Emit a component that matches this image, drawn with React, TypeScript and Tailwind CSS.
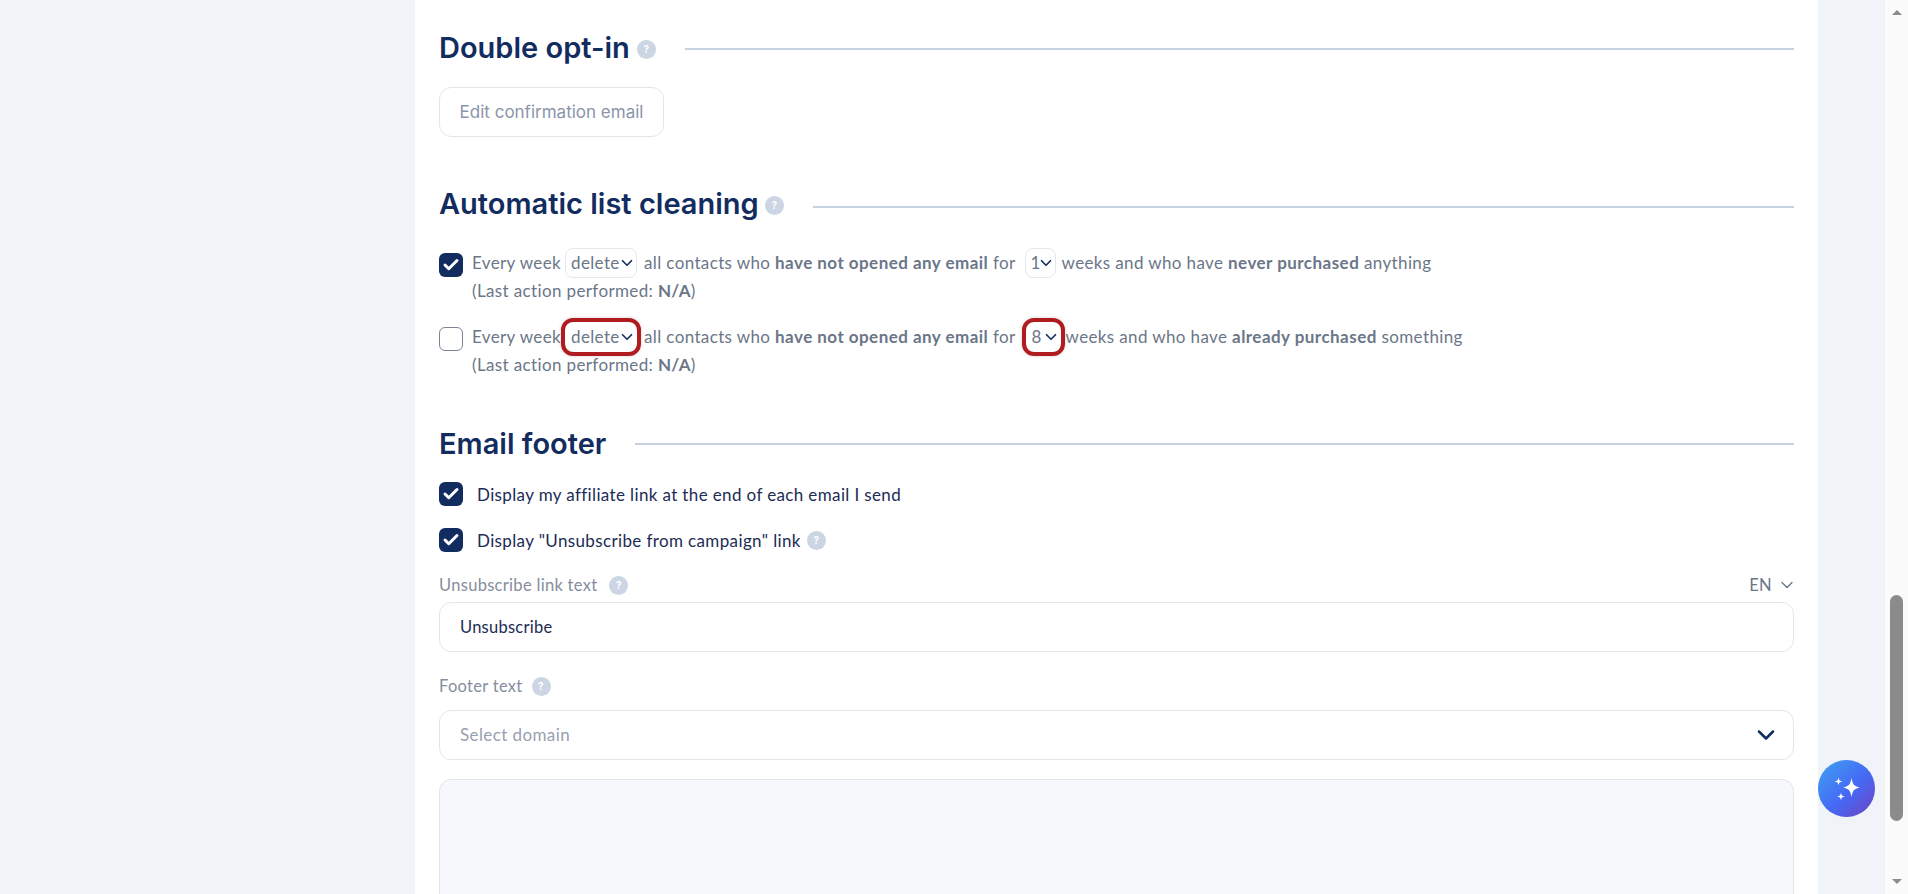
import { Check, ChevronDown } from "lucide-react";

const body = "font-['Lato','Liberation_Sans',sans-serif]";

function Help({ className = "" }: { className?: string }) {
    return (
        <span className={`inline-flex h-[19px] w-[19px] shrink-0 items-center justify-center rounded-full bg-[#cbd5e3] font-['Inter',sans-serif] text-[10px] font-bold leading-none text-white ${className}`}>
            ?
        </span>
    );
}

function SectionTitle({ title, help, gap, line = "" }: { title: string; help?: string; gap: string; line?: string }) {
    return (
        <div className="flex h-[36px] items-center">
            <h2 className="font-['Inter',sans-serif] text-[29px] font-semibold leading-[36px] text-[#132c60]">{title}</h2>
            {help && <Help className={`mt-[2px] ${help}`} />}
            <div className={`h-[2px] flex-1 bg-[#c8d3e1] ${gap} ${line}`} />
        </div>
    );
}

function Box({ checked }: { checked: boolean }) {
    if (!checked) {
        return <span className="block h-[24px] w-[24px] shrink-0 rounded-[6px] border border-[#7a8494] bg-white" />;
    }
    return (
        <span className="flex h-[24px] w-[24px] shrink-0 items-center justify-center rounded-[6px] bg-[#132c60]">
            <Check size={18} strokeWidth={4} color="#fff" />
        </span>
    );
}

function MiniSelect({ value, width, marked = false }: { value: string; width: string; marked?: boolean }) {
    return (
        <span
            className={`inline-flex h-[30px] items-center justify-between rounded-[8px] border pl-[5px] align-middle ${width} ${
                marked
                    ? "border-transparent outline-[4px] outline-[#b01c20] shadow-[0_0_4px_3px_rgba(90,40,40,0.35)]"
                    : "border-[#e4e8ee]"
            }`}
        >
            <span>{value}</span>
            <ChevronDown size={18} strokeWidth={2.2} color="#132c60" className="-ml-[4px] shrink-0" />
        </span>
    );
}

function CleaningRow({ checked, marked, weeks, tail, bold, end }: {
    checked: boolean;
    marked: boolean;
    weeks: string;
    tail: string;
    bold: string;
    end: string;
}) {
    return (
        <div className="flex">
            <div className="pt-[5px]">
                <Box checked={checked} />
            </div>
            <div className="ml-[9px] text-[17px] leading-[28px] tracking-[0.37px] text-[#6b7688]">
                <div className="flex h-[30px] items-center whitespace-pre">
                    <span>Every week</span>
                    <span className="ml-[4px] mr-[7px] flex">
                        <MiniSelect value="delete" width="w-[72px]" marked={marked} />
                    </span>
                    <span>all contacts who <b className="font-bold tracking-[0.46px]">have not opened any email</b> for</span>
                    <span className={marked ? "ml-[10px] mr-[5px] flex" : "ml-[9px] mr-[6px] flex"}>
                        <MiniSelect value={weeks} width={marked ? "w-[35px]" : "w-[31px]"} marked={marked} />
                    </span>
                    <span>{tail} <b className="font-bold tracking-[0.46px]">{bold}</b> {end}</span>
                </div>
                <div className="-mt-[1px]">(Last action performed: <b className="font-bold">N/A</b>)</div>
            </div>
        </div>
    );
}

function Sparkles() {
    return (
        <svg width="28" height="28" viewBox="0 0 28 28" fill="#fff">
            <path d="M18.5 3 C19.8 9.6 20.6 11 27 12.5 C20.6 14 19.8 15.4 18.5 22 C17.2 15.4 16.4 14 10 12.5 C16.4 11 17.2 9.6 18.5 3 Z" />
            <path d="M5.5 2.5 C6.1 5.6 6.5 6 9.5 6.5 C6.5 7 6.1 7.4 5.5 10.5 C4.9 7.4 4.5 7 1.5 6.5 C4.5 6 4.9 5.6 5.5 2.5 Z" />
            <path d="M8 17.5 C8.6 20.6 9 21 12 21.5 C9 22 8.6 22.4 8 25.5 C7.4 22.4 7 22 4 21.5 C7 21 7.4 20.6 8 17.5 Z" />
        </svg>
    );
}

export default function App() {
    return (
        <div className={`relative flex h-[894px] w-[1908px] overflow-hidden bg-[#f0f3f8] ${body}`}>
            <div className="min-w-0 flex-1 pl-[415px] pr-[67px]">
                <main className="h-full bg-white px-[24px] pt-[30px]">
                    <SectionTitle title="Double opt-in" help="ml-[7px]" gap="ml-[29px]" line="mt-[1px]" />

                    <button className="mt-[21px] block h-[50px] w-[225px] rounded-[12px] border border-[#e2e6ec] pt-[1px] font-['Inter',sans-serif] text-[17px] text-[#8a94ab]">
                        Edit confirmation email
                    </button>

                    <div className="mt-[49px]">
                        <SectionTitle title="Automatic list cleaning" help="ml-[6px]" gap="ml-[29px]" line="mt-[6px]" />
                    </div>

                    <div className="mt-[26px] flex flex-col gap-[17px]">
                        <CleaningRow checked marked={false} weeks="1" tail="weeks and who have" bold="never purchased" end="anything" />
                        <CleaningRow checked={false} marked weeks="8" tail="weeks and who have" bold="already purchased" end="something" />
                    </div>

                    <div className="mt-[47px]">
                        <SectionTitle title="Email footer" gap="ml-[29px]" />
                    </div>

                    <label className="mt-[20px] flex h-[24px] items-center gap-[14px] text-[17px] tracking-[0.37px] text-[#1c2c54]">
                        <Box checked />
                        <span className="pt-[1px]">Display my affiliate link at the end of each email I send</span>
                    </label>
                    <label className="mt-[22px] flex h-[24px] items-center text-[17px] tracking-[0.37px] text-[#1c2c54]">
                        <Box checked />
                        <span className="ml-[14px] pt-[1px]">Display "Unsubscribe from campaign" link</span>
                        <Help className="ml-[6px]" />
                    </label>

                    <div className="mt-[23px] flex h-[20px] items-center justify-between text-[16.5px] tracking-[0.3px] text-[#858e9e]">
                        <span className="flex items-center">
                            <span className="pt-[1px]">Unsubscribe link text</span>
                            <Help className="ml-[12px]" />
                        </span>
                        <span className="flex items-center gap-[5px] text-[#6b7688]">
                            <span className="pt-[1px]">EN</span>
                            <ChevronDown size={20} strokeWidth={1.6} className="-mr-[3px]" />
                        </span>
                    </div>
                    <div className="mt-[7px] flex h-[50px] items-center rounded-[12px] border border-[#e2e6ec] px-[20px] pt-[1px] text-[16.5px] tracking-[0.25px] text-[#1c2c54]">
                        Unsubscribe
                    </div>

                    <div className="mt-[24px] flex h-[20px] items-center text-[16.5px] tracking-[0.3px] text-[#858e9e]">
                        <span className="pt-[1px]">Footer text</span>
                        <Help className="ml-[9px]" />
                    </div>
                    <div className="mt-[14px] flex h-[50px] items-center justify-between rounded-[12px] border border-[#e2e6ec] pl-[20px] pr-[13px] text-[17px] tracking-[0.4px] text-[#97a0b0]">
                        Select domain
                        <ChevronDown size={28} strokeWidth={2.2} color="#132c60" />
                    </div>

                    <div className="mt-[19px] h-[200px] rounded-[12px] border border-[#e2e6ec] bg-[#f6f8fb]" />
                </main>
            </div>

            <aside className="flex w-[23px] shrink-0 flex-col items-center bg-[#fbfbfb] pt-[10px]">
                <span className="h-0 w-0 border-x-[5px] border-b-[5px] border-x-transparent border-b-[#8b8b8b]" />
                <div className="mt-[580px] h-[226px] w-[13px] rounded-full bg-[#8b8b8b]" />
                <span className="mt-[58px] h-0 w-0 border-x-[5px] border-t-[5px] border-x-transparent border-t-[#8b8b8b]" />
            </aside>

            <button className="absolute left-[1818px] top-[760px] flex h-[57px] w-[57px] items-center justify-center rounded-full bg-[linear-gradient(135deg,#3f9df0_5%,#4569f5_55%,#6f42c1_100%)]">
                <Sparkles />
            </button>
        </div>
    );
}
